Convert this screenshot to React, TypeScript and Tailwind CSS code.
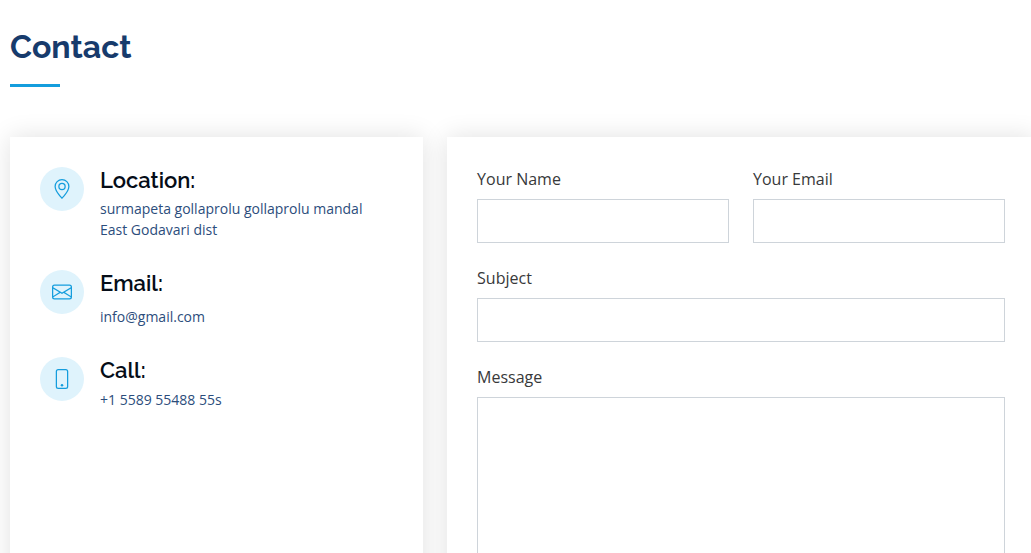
import type { ReactNode } from "react";
import { BsEnvelope, BsGeoAlt, BsPhone } from "react-icons/bs";

type InfoItemProps = {
  icon: ReactNode;
  title: string;
  children: ReactNode;
};

function InfoItem({ icon, title, children }: InfoItemProps) {
  return (
    <div className="flex gap-4">
      <div className="flex size-11 shrink-0 items-center justify-center rounded-full bg-[#dff3fc] text-xl text-[#149ddd]">
        {icon}
      </div>
      <div>
        <h4 className="font-['Raleway','Lato',sans-serif] text-[22px] leading-[26px] font-semibold text-[#050d18]">
          {title}
        </h4>
        {children}
      </div>
    </div>
  );
}

const inputStyle =
  "block w-full border border-[#ced4da] bg-white px-3 text-sm text-[#212529] outline-none focus:border-[#149ddd]";

function Field({ id, label, type = "text" }: { id: string; label: string; type?: string }) {
  return (
    <div>
      <label htmlFor={id} className="mb-2 block leading-6">
        {label}
      </label>
      <input id={id} name={id} type={type} className={`${inputStyle} h-11`} />
    </div>
  );
}

export default function App() {
  return (
    <main className="overflow-x-clip bg-white pt-7 pb-8 pl-[10px] font-['Open_Sans',sans-serif] text-[#38393a]">
      <h2 className="font-['Raleway','Lato',sans-serif] text-[32px] leading-[38px] font-bold text-[#173b6c]">
        Contact
      </h2>
      <div className="mt-[18px] h-[3px] w-[50px] bg-[#149ddd]" />

      <div className="-mr-1 mt-[50px] grid grid-cols-12 gap-6">
        <section className="col-span-5 flex flex-col gap-[30px] bg-white p-[30px] shadow-[0_0_24px_rgba(0,0,0,0.12)]">
          <InfoItem icon={<BsGeoAlt />} title="Location:">
            <p className="mt-[5px] text-sm leading-[21px] text-[#2c4d7c]">
              surmapeta gollaprolu gollaprolu mandal East Godavari dist
            </p>
          </InfoItem>
          <InfoItem icon={<BsEnvelope />} title="Email:">
            <p className="mt-[10px] text-sm leading-[21px] text-[#2c4d7c]">info@gmail.com</p>
          </InfoItem>
          <InfoItem icon={<BsPhone />} title="Call:">
            <p className="mt-[6px] text-sm leading-[21px] text-[#2c4d7c]">+1 5589 55488 55s</p>
          </InfoItem>
        </section>

        <form className="col-span-7 flex flex-col gap-[23px] bg-white p-[30px] shadow-[0_0_24px_rgba(0,0,0,0.12)]">
          <div className="grid grid-cols-2 gap-6">
            <Field id="name" label="Your Name" />
            <Field id="email" label="Your Email" type="email" />
          </div>
          <Field id="subject" label="Subject" />
          <div>
            <label htmlFor="message" className="mb-2 block leading-6">
              Message
            </label>
            <textarea id="message" name="message" rows={10} className={`${inputStyle} resize-none py-[10px] leading-6`} />
          </div>
        </form>
      </div>
    </main>
  );
}
